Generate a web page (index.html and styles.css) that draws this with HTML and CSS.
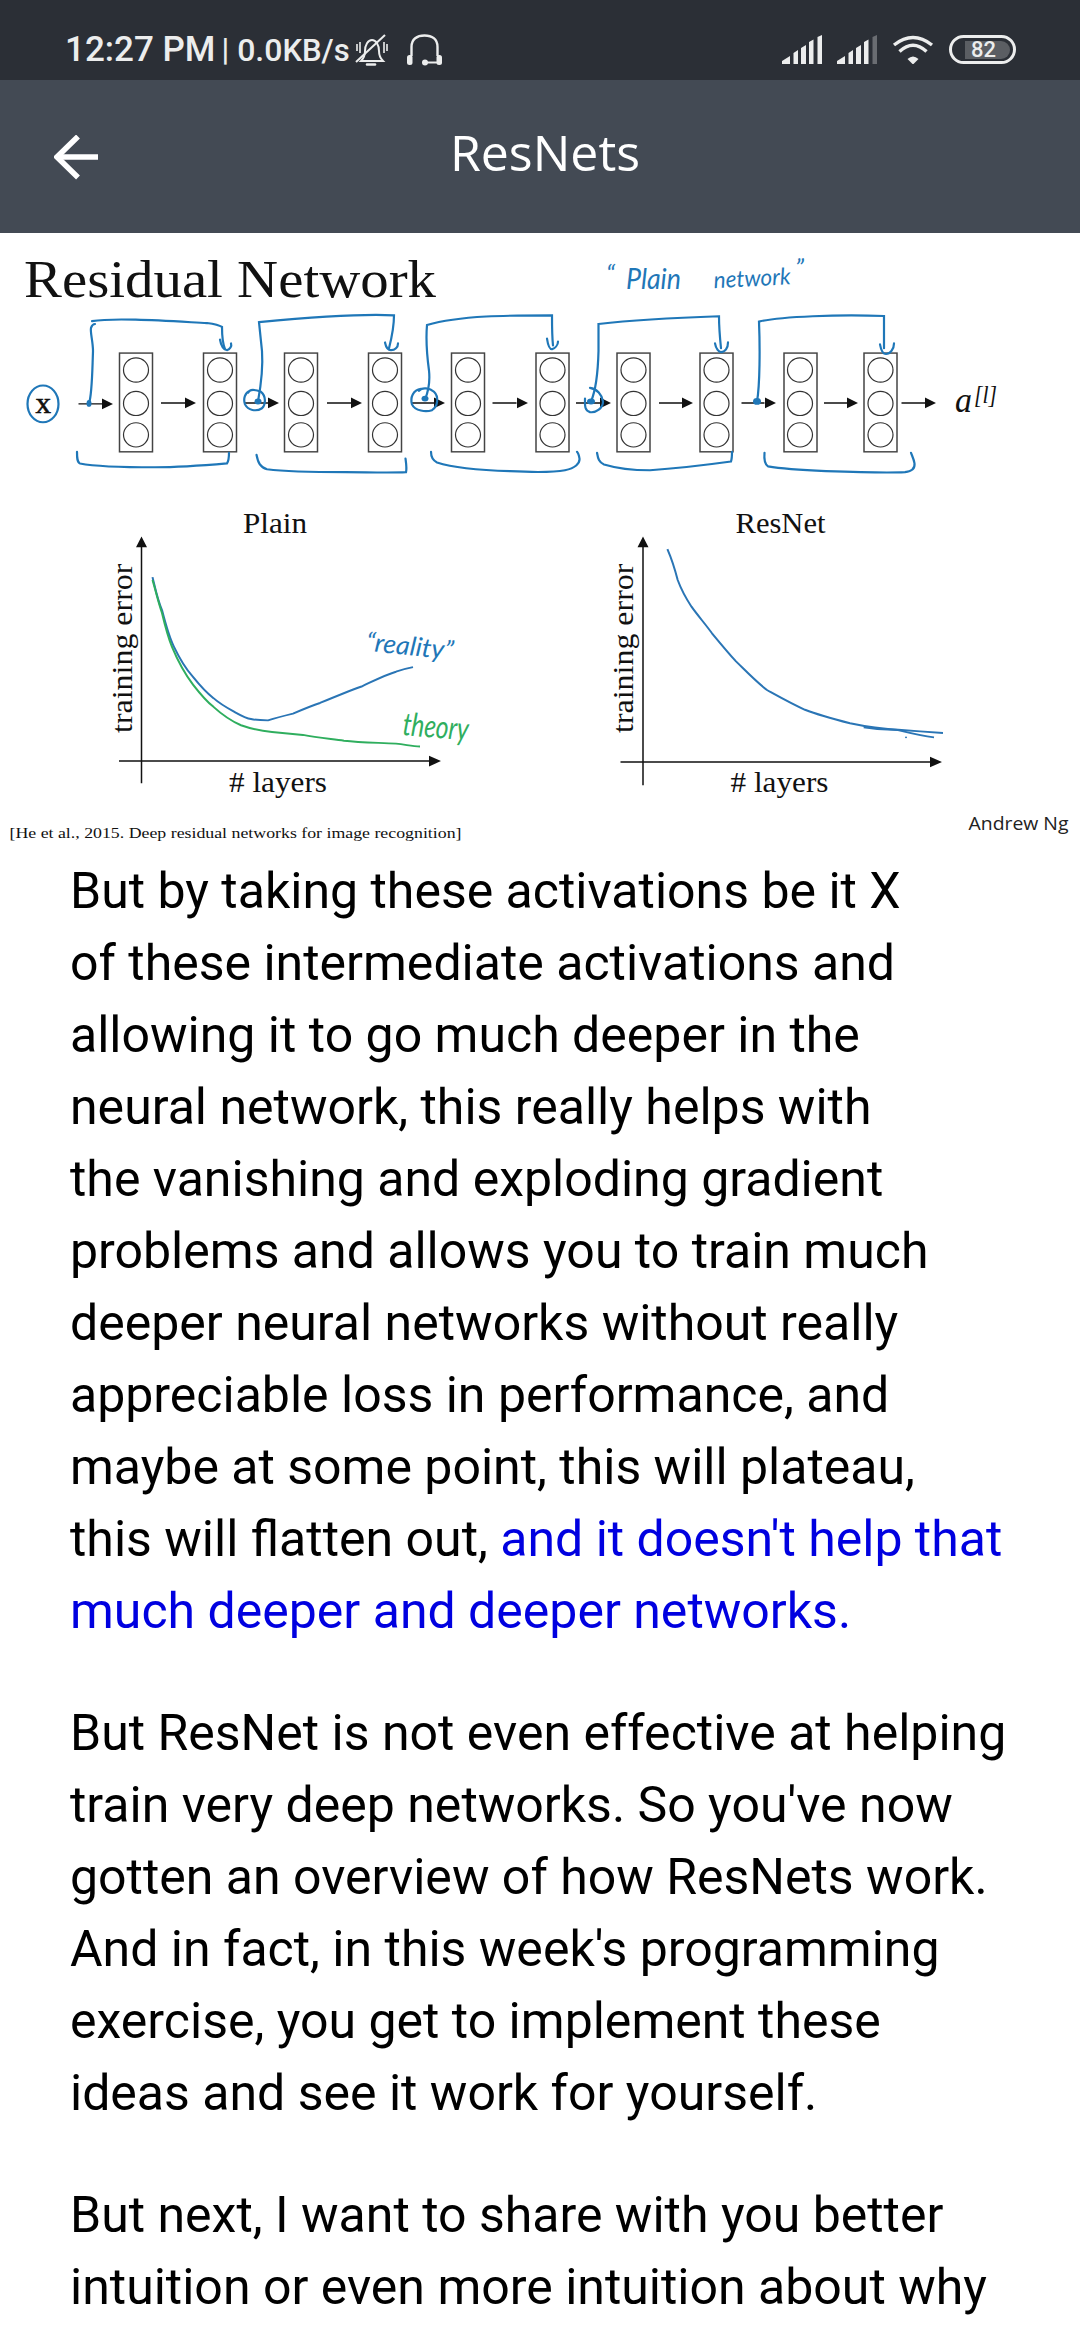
FILE: index.html
```html
<!DOCTYPE html>
<html lang="en">
<head>
  <meta charset="UTF-8">
  <meta name="viewport" content="width=device-width, initial-scale=1.0">
  <title>ResNets</title>
  <link rel="stylesheet" href="styles.css">
</head>
<body>
  <div class="status-bar">
    <div class="status-left">
      <span class="clock">12:27 PM</span>
      <span class="sep">|</span>
      <span class="speed">0.0<span class="speed-unit">KB/s</span></span>
      <!-- muted bell -->
      <svg class="ic-bell" width="34" height="32" viewBox="0 0 34 32" fill="none" stroke="#eceded" stroke-width="2">
        <path d="M6 27c2-2 4-4 4-10 0-6 3-11 7-11s7 5 7 11c0 6 2 8 4 10z"/>
        <path d="M12 30.5h8" stroke-width="2.5" stroke-linecap="round"/>
        <path d="M1 28L30 1" stroke-width="2"/>
        <path d="M2 10v7M5 8v11M29 8v11M32 10v7" stroke-width="1.6"/>
      </svg>
      <!-- headset -->
      <svg class="ic-headset" width="35" height="32" viewBox="0 0 35 32" fill="none" stroke="#eceded" stroke-width="2.4">
        <path d="M4.5 22V13C4.5 5 10 1.5 17.5 1.5S30.5 5 30.5 13V22"/>
        <path d="M18 28.5h14" stroke-width="2"/>
        <rect x="0" y="21" width="5.5" height="10" rx="2.5" fill="#eceded" stroke="none"/>
        <rect x="29.5" y="21" width="5.5" height="10" rx="2.5" fill="#eceded" stroke="none"/>
        <circle cx="18" cy="28.5" r="3" fill="#eceded" stroke="none"/>
      </svg>
    </div>
    <div class="status-right">
      <svg width="40" height="29" viewBox="0 0 40 29" fill="#eceded">
        <path d="M0 29v-3l8-5v8zM11.5 29V18l4.500-3v14zM19 29V13l5-3v19zM27 29V7l4.500-2.500V29zM35.500 29V2L40 0v29z"/>
      </svg>
      <svg width="40" height="29" viewBox="0 0 40 29" fill="#eceded">
        <path d="M0 29v-3l8-5v8zM11.5 29V18l4.500-3v14zM19 29V13l5-3v19zM27 29V7l4.500-2.500V29z"/>
        <path d="M35.5 29V2L40 0v29z" fill="#6a6d72"/>
      </svg>
      <svg width="42" height="29" viewBox="0 0 42 29" fill="none" stroke="#eceded" stroke-width="3.4">
        <path d="M2 10Q21-5 40 10"/>
        <path d="M7.5 16.5Q21 4 34.5 16.5"/>
        <path d="M21 29.5L15.5 24Q21 19 26.5 24z" fill="#eceded" stroke="none"/>
      </svg>
      <div class="battery">
        <div class="battery-fill">82</div>
      </div>
    </div>
  </div>

  <header class="app-bar">
    <svg class="back" width="46" height="46" viewBox="0 0 46 46" fill="none" stroke="#fff" stroke-width="5.5">
      <path d="M44 22H4"/>
      <path d="M24 1.5L3 22 24 42.5"/>
    </svg>
    <h1>ResNets</h1>
  </header>

  <!-- lecture slide -->
  <svg class="slide" width="1080" height="620" viewBox="0 233 1080 620">
    <text class="tex" x="24" y="296.5" font-size="52" textLength="412" lengthAdjust="spacingAndGlyphs">Residual Network</text>

    <g fill="none" transform="translate(0 7.5) scale(1 .968)">
      <ellipse class="hand" cx="43" cy="409.5" rx="15.5" ry="19"/>
      <text class="tex tex-x" x="35.5" y="419" font-size="31">x</text>

      <g class="boxes">
        <rect x="119.5" y="357" width="33" height="102"/>
        <rect x="203.5" y="357" width="33" height="102"/>
        <rect x="284.5" y="357" width="33" height="102"/>
        <rect x="368.5" y="357" width="33" height="102"/>
        <rect x="451.5" y="357" width="33" height="102"/>
        <rect x="536" y="357" width="33" height="102"/>
        <rect x="617" y="357" width="33" height="102"/>
        <rect x="700" y="357" width="33" height="102"/>
        <rect x="784" y="357" width="33" height="102"/>
        <rect x="864" y="357" width="33" height="102"/>
      </g>
      <g class="nodes">
        <circle cx="136" cy="374.5" r="12.5"/><circle cx="136" cy="409" r="12.5"/><circle cx="136" cy="441.5" r="12.5"/>
        <circle cx="220" cy="374.5" r="12.5"/><circle cx="220" cy="409" r="12.5"/><circle cx="220" cy="441.5" r="12.5"/>
        <circle cx="301" cy="374.5" r="12.5"/><circle cx="301" cy="409" r="12.5"/><circle cx="301" cy="441.5" r="12.5"/>
        <circle cx="385" cy="374.5" r="12.5"/><circle cx="385" cy="409" r="12.5"/><circle cx="385" cy="441.5" r="12.5"/>
        <circle cx="468" cy="374.5" r="12.5"/><circle cx="468" cy="409" r="12.5"/><circle cx="468" cy="441.5" r="12.5"/>
        <circle cx="552.5" cy="374.5" r="12.5"/><circle cx="552.5" cy="409" r="12.5"/><circle cx="552.5" cy="441.5" r="12.5"/>
        <circle cx="633.5" cy="374.5" r="12.5"/><circle cx="633.5" cy="409" r="12.5"/><circle cx="633.5" cy="441.5" r="12.5"/>
        <circle cx="716.5" cy="374.5" r="12.5"/><circle cx="716.5" cy="409" r="12.5"/><circle cx="716.5" cy="441.5" r="12.5"/>
        <circle cx="800" cy="374.5" r="12.5"/><circle cx="800" cy="409" r="12.5"/><circle cx="800" cy="441.5" r="12.5"/>
        <circle cx="880.5" cy="374.5" r="12.5"/><circle cx="880.5" cy="409" r="12.5"/><circle cx="880.5" cy="441.5" r="12.5"/>
      </g>

      <g class="arrows">
        <path d="M78.5 409.5h24M161 408.5h24M244.5 408.5h24M327 408.5h24M411.5 408.5h23M492.5 408.5h24M576 408.5h24M659 408.5h23M741.5 408.5h23M824 408.5h23M901.5 408.5h24"/>
        <path class="head" d="M102 404l11 5.5-11 5.5zM185 403l11 5.5-11 5.5zM268 403l11 5.5-11 5.5zM351 403l11 5.5-11 5.5zM434 403l11 5.5-11 5.5zM517 403l11 5.5-11 5.5zM600 403l11 5.5-11 5.5zM682 403l11 5.5-11 5.5zM765 403l11 5.5-11 5.5zM847 403l11 5.5-11 5.5zM925 403l11 5.5-11 5.5z"/>
      </g>

      <!-- skip connections -->
      <g class="hand">
        <path d="M89 409C92 400 92 385 93 355 93 345 90 335 91 331 92 328 93 327 95 327"/>
        <path d="M92 324C115 320 170 324 207 326 214 327 219 328 222 330 222 338 222 345 225 353"/>
        <path d="M220 343C221 350 224 354 227 354 230 353 232 350 231 347"/>
        <path d="M258 407C261 390 263 370 262 355L259 325C300 321 360 316 394 318 394 328 392 340 389 352"/>
        <path d="M385 346C386 351 388 354 391 354 395 354 398 351 398 347"/>
        <path d="M425 405C429 395 430 385 429 375 427 360 426 340 427 328 460 318 510 318 552 318 552 330 552 340 553 349"/>
        <path d="M547 342C548 349 550 353 552 353 555 352 558 349 558 345"/>
        <path d="M591 407C596 395 598 375 598.5 355V327C640 322 690 320 719 319 719 330 720 342 721 352"/>
        <path d="M715 347C716 353 719 356 721 356 725 356 728 352 728 346"/>
        <path d="M757 407C760 390 760 350 759 324.5 780 319 840 317 884 318.7 884 330 884 342 884 352"/>
        <path d="M880 348C881 354 883 358 886 358 890 358 894 353 894 347"/>
        <path d="M248 398C250 393 256 395 261 397 266 401 266 410 262 414 256 418 248 416 245 410 243 404 245 398 250 396"/>
        <path d="M419 396C422 392 430 393 434 397 439 402 438 412 432 416 426 418 415 417 412 410 410 403 413 395 421 394"/>
        <path d="M590 393C597 394 602 400 603 407 603 414 596 419 590 418 584 416 585 410 585 404"/>
        <path d="M77 459C77 465 77 470 80 471 100 475 130 475 155 475 180 475 205 473 227 471 229 468 229 464 229 460"/>
        <path d="M256.5 462C258 470 260 475 267 477 290 480 320 480 345 480 365 480 390 481 406 480 407 476 406 470 405.5 466"/>
        <path d="M431 459C431 465 433 468 437 470 455 476 480 478 510 479 530 480 550 481 565 478 575 476 580 471 579.5 466 579 463 578 460 577 459"/>
        <path d="M597 460C598 466 599 470 604 472 620 477 635 478 650 478 680 476 710 472 731 469 732 466 732 462 732 459"/>
        <path d="M764.5 460C764 466 765 472 768 474 785 477 805 478 826 479 855 480 885 481 905 480 913 479 915 475 914.5 471 914 467 912 463 911 460"/>
      </g>
      <g class="blobs">
        <ellipse cx="89" cy="409" rx="2.5" ry="3.5"/>
        <ellipse cx="258" cy="407" rx="3.5" ry="3"/>
        <ellipse cx="425" cy="404" rx="3.5" ry="3"/>
        <ellipse cx="591" cy="407" rx="4" ry="3"/>
        <ellipse cx="757" cy="407" rx="4" ry="3.5"/>
      </g>
      <text class="tex-it" x="955" y="418" font-size="36" textLength="17" lengthAdjust="spacingAndGlyphs">a</text>
      <text class="tex-it" x="974" y="409" font-size="25" textLength="23" lengthAdjust="spacingAndGlyphs">[l]</text>
      <text class="scrawl" x="606" y="285" font-size="26">“</text>
      <text class="scrawl" x="626" y="291" font-size="30" textLength="55" lengthAdjust="spacingAndGlyphs">Plain</text>
      <text class="scrawl" x="714" y="290" font-size="24" textLength="77" lengthAdjust="spacingAndGlyphs" transform="rotate(-3 714 290)">network</text>
      <text class="scrawl" x="795" y="278" font-size="26">”</text>
    </g>

    <!-- plain plot -->
    <g fill="none" transform="translate(0 15.7) scale(1 .968)">
      <text class="tex" x="243" y="534" font-size="30" textLength="64" lengthAdjust="spacingAndGlyphs">Plain</text>
      <path class="axis" d="M141.5 545V793M119 770H430"/>
      <path class="head" d="M141.5 538l5.5 11h-11zM441 770l-12-5.5v11z"/>
      <text class="tex" x="132.5" y="741" font-size="30" textLength="175" lengthAdjust="spacingAndGlyphs" transform="rotate(-90 132.5 741)">training error</text>
      <text class="tex" x="229" y="802" font-size="30" textLength="98" lengthAdjust="spacingAndGlyphs"># layers</text>
      <path class="curve-blue" d="M152.5 580C156 595 158 605 162 614 166 630 169 642 174 652 180 665 186 675 193 683 200 692 206 699 213.5 705 220 711 227 715 234 719 241 723 246 726 251 726.6 257 728 262 728 268 728 277 725 285 723 293 721 302 717 311 713 320 710 334 704 348 698 361.6 693 374 687 385 681 396 677.7 403 675 408 674 413 673"/>
      <path class="curve-green" d="M152.5 583C156 595 158 605 162 617 165 630 168 642 172 652 178 667 185 680 193 691 199 699 206 708 213.5 714 222 722 232 729 241 733 252 737 262 739 272 740 283 741 293 742 303 743 317 746 330 747 344 749 361 751 380 751 396 752 406 753 412 755 420 755"/>
      <text class="scrawl" x="365" y="656" font-size="27" textLength="88" lengthAdjust="spacingAndGlyphs" transform="rotate(6 365 656)">“reality”</text>
      <text class="scrawl scrawl-green" x="402" y="743" font-size="33" textLength="66" lengthAdjust="spacingAndGlyphs" transform="rotate(5 402 743)">theory</text>
    </g>

    <!-- resnet plot -->
    <g fill="none" transform="translate(0 15.7) scale(1 .968)">
      <text class="tex" x="735.5" y="534" font-size="30" textLength="90" lengthAdjust="spacingAndGlyphs">ResNet</text>
      <path class="axis" d="M643 545V795M620.5 771H931"/>
      <path class="head" d="M643 538l5.5 11h-11zM942 771l-12-5.5v11z"/>
      <text class="tex" x="633.5" y="741" font-size="30" textLength="175" lengthAdjust="spacingAndGlyphs" transform="rotate(-90 633.5 741)">training error</text>
      <text class="tex" x="730.5" y="802" font-size="30" textLength="98" lengthAdjust="spacingAndGlyphs"># layers</text>
      <path class="curve-blue" d="M667.4 551C672 562 675 572 677.7 583 682 595 686 602 691.5 610.5 698 620 705 628 712 638 720 648 728 658 736 667 746 677 756 688 767 696.6 780 704 792 711 805 717 820 723 835 727 850 731 868 735 885 737 901.6 738 915 739 930 740 943 741"/>
      <path class="curve-blue" d="M863.7 735C875 737 888 738 898 738 910 741 922 744 934 745.5"/>
      <circle class="head-blue" cx="906" cy="745.5" r="1"/>
      <text class="tex" x="9.5" y="849" font-size="16" textLength="452" lengthAdjust="spacingAndGlyphs">[He et al., 2015. Deep residual networks for image recognition]</text>
      <text class="credit" x="968.5" y="841" font-size="19.5" textLength="100" lengthAdjust="spacingAndGlyphs">Andrew Ng</text>
    </g>
  </svg>

  <main class="transcript">
    <p>But by taking these activations be it X<br>
    of these intermediate activations and<br>
    allowing it to go much deeper in the<br>
    neural network, this really helps with<br>
    the vanishing and exploding gradient<br>
    problems and allows you to train much<br>
    deeper neural networks without really<br>
    appreciable loss in performance, and<br>
    maybe at some point, this will plateau,<br>
    this will flatten out, <span class="highlight">and it doesn't help that<br>
    much deeper and deeper networks.</span></p>
    <p>But ResNet is not even effective at helping<br>
    train very deep networks. So you've now<br>
    gotten an overview of how ResNets work.<br>
    And in fact, in this week's programming<br>
    exercise, you get to implement these<br>
    ideas and see it work for yourself.</p>
    <p>But next, I want to share with you better<br>
    intuition or even more intuition about why</p>
  </main>
</body>
</html>
```

FILE: styles.css
```css
html, body {
  margin: 0;
  padding: 0;
  height: 2340px;
  overflow: hidden;
  background-color: #fff;
}

.status-bar {
  display: flex;
  justify-content: space-between;
  align-items: center;
  height: 80px;
  padding: 19px 64px 0 65px;
  box-sizing: border-box;
  background-color: #2b2f36;
  color: #eceded;
  font-family: Roboto, sans-serif;
}

.status-left {
  display: flex;
  align-items: center;
  font-weight: 500;
  font-size: 35px;
}

.sep {
  margin: 0 8px 0 6px;
  font-size: 31px;
}

.speed {
  font-size: 32px;
}

.speed-unit {
  font-size: 31px;
}

.ic-bell {
  margin-left: 5px;
}

.ic-headset {
  margin-left: 18px;
}

.status-right {
  display: flex;
  align-items: center;
  gap: 15px;
}

.battery {
  display: flex;
  align-items: center;
  box-sizing: border-box;
  width: 67px;
  height: 29px;
  padding: 3px 3px 3px 13px;
  border: 3px solid #eceded;
  border-radius: 15px;
}

.battery-fill {
  flex: 1;
  height: 18px;
  padding-left: 6px;
  border-radius: 0 9px 9px 0;
  background-color: #5b5e63;
  font-size: 22px;
  font-weight: 500;
  line-height: 18px;
}

.app-bar {
  position: relative;
  display: flex;
  align-items: center;
  justify-content: center;
  height: 153px;
  background-color: #434a54;
}

.app-bar h1 {
  margin: 0 0 10px 10px;
  color: #fff;
  font-family: "Open Sans", sans-serif;
  font-size: 50px;
  font-weight: 400;
}

.back {
  position: absolute;
  left: 54px;
  top: 55px;
}

.slide {
  display: block;
}

.tex {
  fill: #111;
  stroke: none;
  font-family: "Liberation Serif", serif;
}

.tex-x {
  stroke: #111;
  stroke-width: 0.6;
}

.tex-it {
  fill: #111;
  stroke: none;
  font-family: "Liberation Serif", serif;
  font-style: italic;
}

.boxes rect {
  fill: none;
  stroke: #444;
  stroke-width: 1.5;
}

.nodes circle {
  fill: none;
  stroke: #333;
  stroke-width: 1.2;
}

.arrows path {
  stroke: #111;
  stroke-width: 1.5;
}

.arrows .head, .head {
  fill: #111;
  stroke: none;
}

.hand {
  fill: none;
  stroke: #1f77b8;
  stroke-width: 2.2;
  stroke-linecap: round;
}

.blobs ellipse {
  fill: #1f77b8;
  stroke: none;
}

.axis {
  stroke: #111;
  stroke-width: 1.5;
}

.curve-blue {
  stroke: #2a75b5;
  stroke-width: 2;
}

.curve-green {
  stroke: #2fae5e;
  stroke-width: 2;
}

.head-blue {
  fill: #2a75b5;
  stroke: none;
}

.scrawl {
  fill: #1f77b8;
  stroke: none;
  font-family: Lato, sans-serif;
  font-style: italic;
  font-weight: 400;
}

.scrawl-green {
  fill: #2fae5e;
}

.credit {
  fill: #222;
  stroke: none;
  font-family: "Open Sans", sans-serif;
}

.transcript {
  padding: 2px 70px 0;
  font-family: Roboto, sans-serif;
  font-size: 50px;
  line-height: 72px;
  color: #000;
}

.transcript p {
  margin: 0 0 50px;
}

.highlight {
  color: #0000e0;
}
```
